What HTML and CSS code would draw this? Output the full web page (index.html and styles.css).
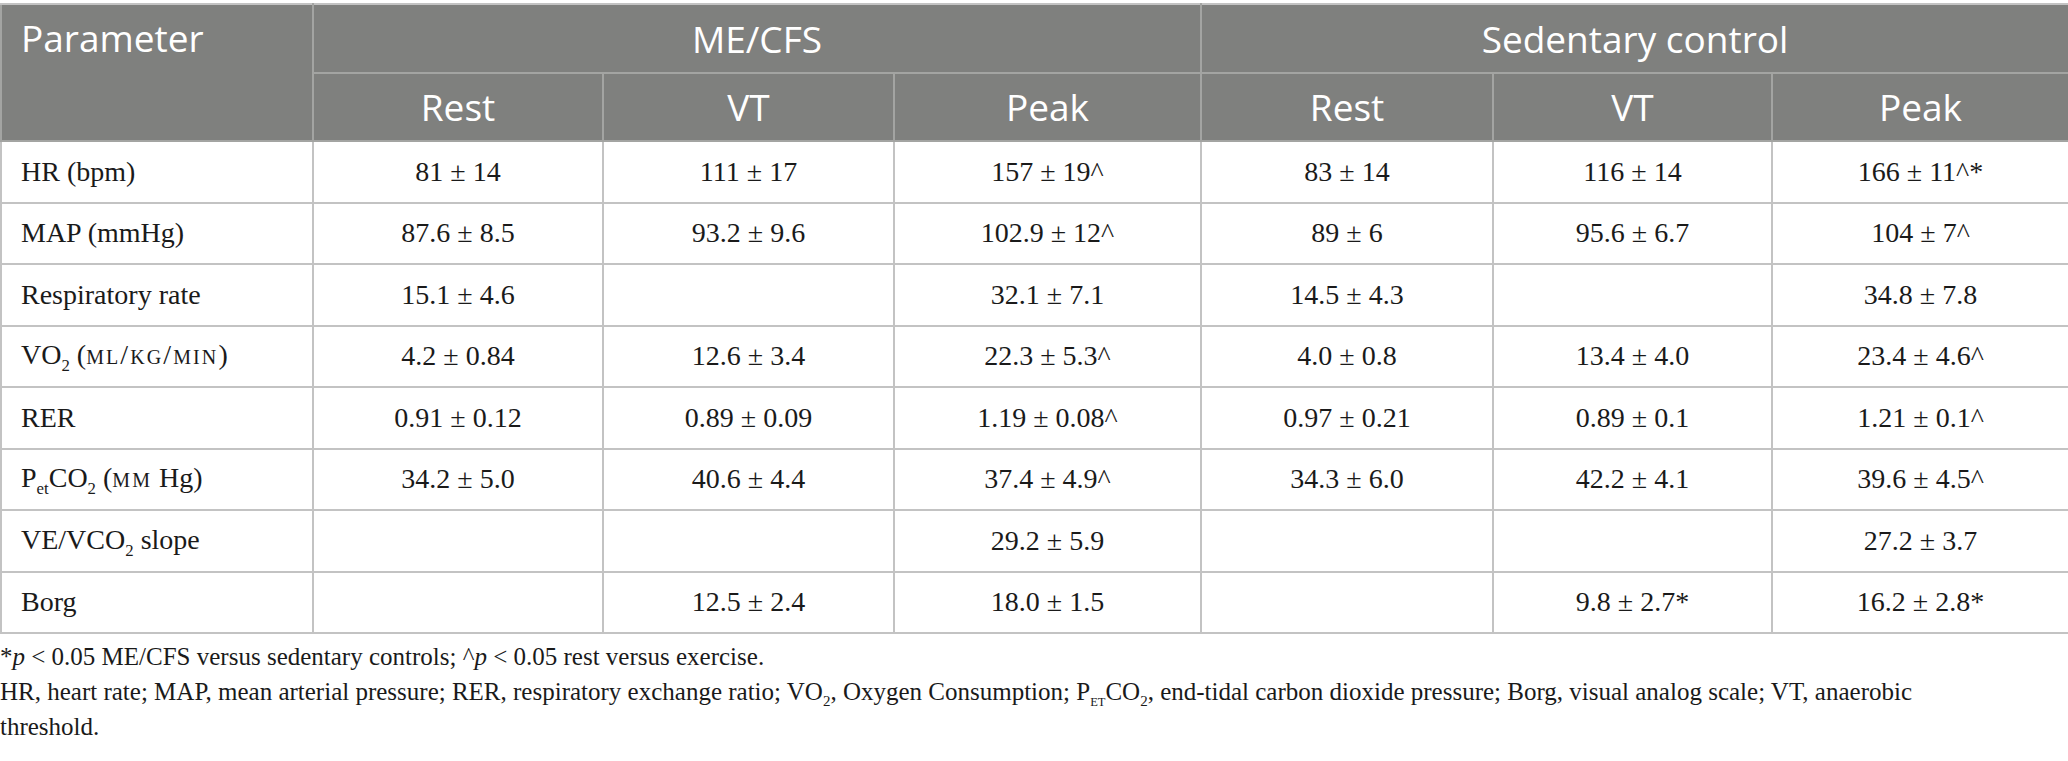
FILE: index.html
```html
<!DOCTYPE html>
<html lang="en">
<head>
<meta charset="utf-8">
<title>Table</title>
<link rel="stylesheet" href="styles.css">
</head>
<body>
<div class="page">
  <table class="data">
    <colgroup>
      <col class="c-param">
      <col class="c-rest1">
      <col class="c-vt1">
      <col class="c-peak1">
      <col class="c-rest2">
      <col class="c-vt2">
      <col class="c-peak2">
    </colgroup>
    <thead>
      <tr class="h1">
        <th class="param" rowspan="2">Parameter</th>
        <th colspan="3">ME/CFS</th>
        <th colspan="3">Sedentary control</th>
      </tr>
      <tr class="h2">
        <th>Rest</th>
        <th>VT</th>
        <th>Peak</th>
        <th>Rest</th>
        <th>VT</th>
        <th>Peak</th>
      </tr>
    </thead>
    <tbody>
      <tr>
        <td class="label">HR (bpm)</td>
        <td>81 ± 14</td>
        <td>111 ± 17</td>
        <td>157 ± 19^</td>
        <td>83 ± 14</td>
        <td>116 ± 14</td>
        <td>166 ± 11^*</td>
      </tr>
      <tr>
        <td class="label">MAP (mmHg)</td>
        <td>87.6 ± 8.5</td>
        <td>93.2 ± 9.6</td>
        <td>102.9 ± 12^</td>
        <td>89 ± 6</td>
        <td>95.6 ± 6.7</td>
        <td>104 ± 7^</td>
      </tr>
      <tr>
        <td class="label">Respiratory rate</td>
        <td>15.1 ± 4.6</td>
        <td></td>
        <td>32.1 ± 7.1</td>
        <td>14.5 ± 4.3</td>
        <td></td>
        <td>34.8 ± 7.8</td>
      </tr>
      <tr>
        <td class="label">VO<sub>2</sub> (<span class="sc">ml/kg/min</span>)</td>
        <td>4.2 ± 0.84</td>
        <td>12.6 ± 3.4</td>
        <td>22.3 ± 5.3^</td>
        <td>4.0 ± 0.8</td>
        <td>13.4 ± 4.0</td>
        <td>23.4 ± 4.6^</td>
      </tr>
      <tr>
        <td class="label">RER</td>
        <td>0.91 ± 0.12</td>
        <td>0.89 ± 0.09</td>
        <td>1.19 ± 0.08^</td>
        <td>0.97 ± 0.21</td>
        <td>0.89 ± 0.1</td>
        <td>1.21 ± 0.1^</td>
      </tr>
      <tr>
        <td class="label">P<sub>et</sub>CO<sub>2</sub> (<span class="sc">mm</span> Hg)</td>
        <td>34.2 ± 5.0</td>
        <td>40.6 ± 4.4</td>
        <td>37.4 ± 4.9^</td>
        <td>34.3 ± 6.0</td>
        <td>42.2 ± 4.1</td>
        <td>39.6 ± 4.5^</td>
      </tr>
      <tr>
        <td class="label">VE/VCO<sub>2</sub> slope</td>
        <td></td>
        <td></td>
        <td>29.2 ± 5.9</td>
        <td></td>
        <td></td>
        <td>27.2 ± 3.7</td>
      </tr>
      <tr>
        <td class="label">Borg</td>
        <td></td>
        <td>12.5 ± 2.4</td>
        <td>18.0 ± 1.5</td>
        <td></td>
        <td>9.8 ± 2.7*</td>
        <td>16.2 ± 2.8*</td>
      </tr>
    </tbody>
  </table>
  <div class="notes">
    <p>*<i>p</i> &lt; 0.05 ME/CFS versus sedentary controls; ^<i>p</i> &lt; 0.05 rest versus exercise.</p>
    <p>HR, heart rate; MAP, mean arterial pressure; RER, respiratory exchange ratio; VO<sub>2</sub>, Oxygen Consumption; P<sub class="sub-caps">ET</sub>CO<sub>2</sub>, end-tidal carbon dioxide pressure; Borg, visual analog scale; VT, anaerobic<br>threshold.</p>
  </div>
</div>
</body>
</html>
```

FILE: styles.css
```css
html, body {
  margin: 0;
  padding: 0;
  background: #ffffff;
}

.page {
  width: 2068px;
  padding-top: 3px;
}

.data {
  width: 2068px;
  border-collapse: collapse;
  table-layout: fixed;
  font-family: "Liberation Serif", "Times New Roman", serif;
  color: #1a1a1a;
}

.c-param { width: 312px; }
.c-rest1 { width: 290px; }
.c-vt1 { width: 291px; }
.c-peak1 { width: 307px; }
.c-rest2 { width: 292px; }
.c-vt2 { width: 279px; }
.c-peak2 { width: 297px; }

.data th {
  background: #7f807e;
  color: #ffffff;
  font-family: "Open Sans", "Noto Sans", sans-serif;
  font-weight: 400;
  font-size: 37px;
  text-align: center;
  padding: 0;
  border: 2px solid #a3a4a2;
  line-height: 44px;
}

.data thead tr:first-child th {
  border-top-color: #c3c3c3;
}

.data .h1 { height: 69px; }
.data .h2 { height: 68px; }

.data th.param {
  text-align: left;
  vertical-align: top;
  padding: 11px 0 0 19px;
}

.data td {
  font-size: 28px;
  text-align: center;
  vertical-align: middle;
  padding: 0;
  border: 2px solid #c3c3c3;
  line-height: 34px;
}

.data tbody tr { height: 61.5px; }

.data td.label {
  text-align: left;
  padding-left: 19px;
}

sub {
  font-size: 60%;
  vertical-align: sub;
  line-height: 1;
}

.sc {
  font-variant: small-caps;
  letter-spacing: 0.075em;
}

.sub-caps {
  font-size: 50%;
}

.notes {
  width: 2068px;
  font-family: "Liberation Serif", "Times New Roman", serif;
  font-size: 25px;
  line-height: 35px;
  color: #1a1a1a;
  padding-top: 5px;
}

.notes p {
  margin: 0;
}
```
